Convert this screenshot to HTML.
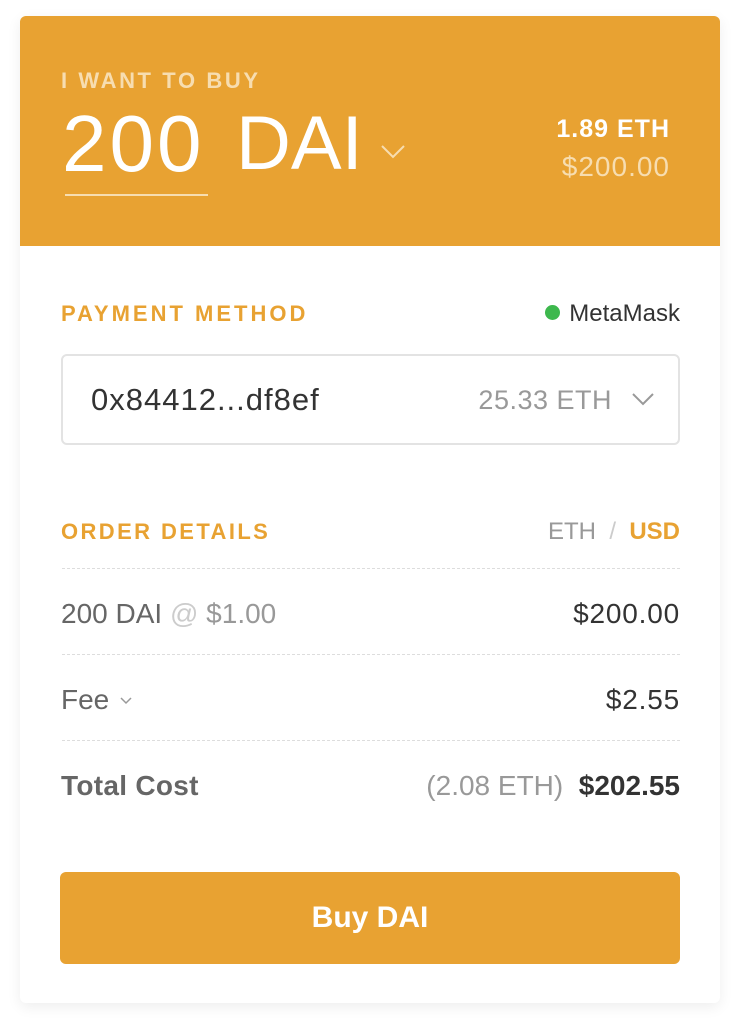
<!DOCTYPE html>
<html><head><meta charset="utf-8"><style>
*{box-sizing:border-box;margin:0;padding:0}
body{width:740px;height:1028px;background:#fff;font-family:"Liberation Sans",sans-serif;position:relative;overflow:hidden}
.card{position:absolute;left:20px;top:16px;width:700px;height:987px;background:#fff;border-radius:6px;box-shadow:0 4px 14px rgba(0,0,0,0.07);overflow:hidden}
.hdr{position:absolute;left:0;top:0;width:700px;height:230px;background:#E8A232}
.a{position:absolute;white-space:nowrap}
.lbl{font-weight:bold;letter-spacing:3px;font-size:21px}
.sep{position:absolute;left:42px;width:618px;border-top:1px dashed #ddd}
</style></head><body>
<div class="card">
<div class="hdr">
<div class="a lbl" style="left:41px;top:52px;color:#F7DDB0;font-size:22px;letter-spacing:2.6px">I WANT TO BUY</div>
<div class="a" style="left:42px;top:88px;font-size:80px;color:#fff;line-height:1;letter-spacing:3px">200</div>
<div style="position:absolute;left:45px;top:178px;width:143px;height:2px;background:#F7DDB0"></div>
<div class="a" style="left:216px;top:90px;font-size:76px;color:#fff;line-height:1">DAI</div>
<svg class="a" style="left:359px;top:127px" width="28" height="18" viewBox="0 0 28 18"><path d="M3 3 L14 14 L25 3" fill="none" stroke="#F7DDB0" stroke-width="2"/></svg>
<div class="a" style="right:50px;top:99px;font-size:25px;font-weight:bold;color:#fff;letter-spacing:1px">1.89 ETH</div>
<div class="a" style="right:50px;top:135px;font-size:28px;color:#F7DDB0;letter-spacing:1px">$200.00</div>
</div>
<div class="a lbl" style="left:41px;top:285px;color:#E8A232;font-size:22px;letter-spacing:3px">PAYMENT METHOD</div>
<div class="a" style="right:40px;top:284px;font-size:24px;color:#333"><span style="display:inline-block;width:15px;height:15px;border-radius:50%;background:#3DB84D;margin-right:9px;vertical-align:1px"></span>MetaMask</div>
<div style="position:absolute;left:41px;top:338px;width:619px;height:91px;border:2px solid #e3e3e3;border-radius:6px"></div>
<div class="a" style="left:71px;top:366px;font-size:31px;color:#333;letter-spacing:1px">0x84412...df8ef</div>
<div class="a" style="right:108px;top:369px;font-size:27px;color:#999;letter-spacing:.5px">25.33 ETH</div>
<svg class="a" style="left:610px;top:375px" width="26" height="16" viewBox="0 0 26 16"><path d="M3 3 L13 13 L23 3" fill="none" stroke="#999" stroke-width="2"/></svg>
<div class="a lbl" style="left:41px;top:503px;color:#E8A232;font-size:22px;letter-spacing:2.4px">ORDER DETAILS</div>
<div class="a" style="right:40px;top:502px;font-size:24px;color:#999">ETH &nbsp;<span style="color:#ccc">/</span>&nbsp; <b style="color:#E8A232">USD</b></div>
<div class="sep" style="top:552px"></div>
<div class="a" style="left:41px;top:582px;font-size:28px;color:#666">200 DAI <span style="color:#ccc">@</span> <span style="color:#999">$1.00</span></div>
<div class="a" style="right:40px;top:582px;font-size:28px;color:#333;letter-spacing:.8px">$200.00</div>
<div class="sep" style="top:638px"></div>
<div class="a" style="left:41px;top:668px;font-size:28px;color:#666">Fee</div>
<svg class="a" style="left:99px;top:680px" width="14" height="10" viewBox="0 0 14 10"><path d="M2 2 L7 7 L12 2" fill="none" stroke="#999" stroke-width="1.5"/></svg>
<div class="a" style="right:40px;top:668px;font-size:28px;color:#333;letter-spacing:.8px">$2.55</div>
<div class="sep" style="top:724px"></div>
<div class="a" style="left:41px;top:754px;font-size:28px;font-weight:bold;color:#666;letter-spacing:.3px">Total Cost</div>
<div class="a" style="right:40px;top:754px;font-size:28px;color:#999">(2.08 ETH)&nbsp; <b style="color:#333">$202.55</b></div>
<div style="position:absolute;left:40px;top:856px;width:620px;height:92px;background:#E8A232;border-radius:6px;color:#fff;font-size:30px;font-weight:bold;text-align:center;line-height:92px">Buy DAI</div>
</div>
</body></html>
